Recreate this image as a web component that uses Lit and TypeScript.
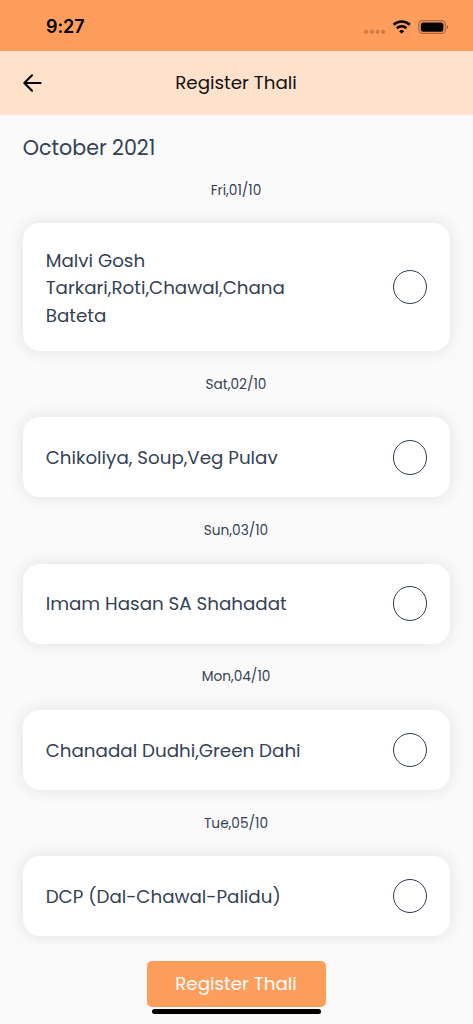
import { LitElement, html, css, svg } from "lit";
import { customElement, property, state } from "lit/decorators.js";

interface Thali {
  date: string;
  menu: string;
}

const THALIS: Thali[] = [
  { date: "Fri,01/10", menu: "Malvi Gosh Tarkari,Roti,Chawal,Chana Bateta" },
  { date: "Sat,02/10", menu: "Chikoliya, Soup,Veg Pulav" },
  { date: "Sun,03/10", menu: "Imam Hasan SA Shahadat" },
  { date: "Mon,04/10", menu: "Chanadal Dudhi,Green Dahi" },
  { date: "Tue,05/10", menu: "DCP (Dal-Chawal-Palidu)" },
];

@customElement("status-bar")
class StatusBar extends LitElement {
  static styles = css`
    :host {
      display: flex;
      align-items: center;
      justify-content: space-between;
      flex: none;
      height: 50.5px;
      box-sizing: border-box;
      padding: 2.5px 24px 0 46px;
      background: #ff9d5c;
      color: #000;
    }
    .time {
      font: 600 18px/24px Inter, sans-serif;
      letter-spacing: -0.1px;
      padding-top: 1px;
    }
    .icons {
      display: block;
    }
  `;
  render() {
    return html`
      <span class="time">9:27</span>
      <svg class="icons" width="86" height="20" viewBox="363 16 86 20">
        <g fill="#c97c49">
          ${[366.2, 371.9, 377.5, 383.2].map((x) => svg`<circle cx=${x} cy="30.8" r="2.1" />`)}
        </g>
        <g fill="none" stroke="#000" stroke-width="2.6">
          <path d="M393.6 23.7a11.7 11.7 0 0 1 16.2 0" />
          <path d="M396.9 27.2a7 7 0 0 1 9.6 0" />
        </g>
        <path d="M401.7 32.8l-2.5-2.6a3.7 3.7 0 0 1 5 0z" />
        <rect x="418.8" y="19.6" width="26.6" height="12.8" rx="4" fill="none" stroke="#a8683e" stroke-width="1.2" />
        <rect x="420.8" y="21.4" width="22.6" height="9.3" rx="2.2" />
        <path d="M446.8 24v4.2c1.7-.8 1.7-3.4 0-4.2z" fill="#8a5533" />
      </svg>
    `;
  }
}

@customElement("thali-card")
class ThaliCard extends LitElement {
  @property() menu = "";
  @state() private chosen = false;

  static styles = css`
    :host {
      display: flex;
      align-items: center;
      justify-content: space-between;
      box-sizing: border-box;
      padding: 22.85px;
      border-radius: 17px;
      background: #fff;
      box-shadow: 0 0 17px rgba(0, 0, 0, 0.1);
    }
    .menu {
      max-width: 262px;
      margin: 0.6px 0 -0.6px;
      font-size: 18.3px;
      line-height: 27.43px;
    }
    .radio {
      flex: none;
      width: 34.3px;
      height: 34.3px;
      box-sizing: border-box;
      padding: 4px;
      border: 1.15px solid #2e3a52;
      border-radius: 50%;
      background: none;
      background-clip: content-box;
    }
    .radio[aria-checked="true"] {
      background-color: #ff9d5c;
    }
  `;
  render() {
    return html`
      <span class="menu">${this.menu}</span>
      <button
        class="radio"
        role="checkbox"
        aria-label=${this.menu}
        aria-checked=${this.chosen ? "true" : "false"}
        @click=${() => (this.chosen = !this.chosen)}
      ></button>
    `;
  }
}

@customElement("app-root")
class AppRoot extends LitElement {
  static styles = css`
    :host {
      display: flex;
      flex-direction: column;
      height: 1024px;
      overflow: hidden;
      background: #fafafa;
      color: #334155;
      font-family: Poppins, Inter, sans-serif;
      font-weight: 400;
    }
    .bar {
      display: grid;
      grid-template-columns: 42px 1fr 43px;
      align-items: center;
      flex: none;
      height: 64px;
      box-sizing: border-box;
      background: #ffe1cc;
      color: #111;
    }
    .back {
      justify-self: end;
      display: block;
    }
    .title {
      text-align: center;
      font-size: 18.3px;
      line-height: 28px;
      padding-top: 1.5px;
    }
    .list {
      flex: none;
      height: 829px;
      box-sizing: border-box;
      overflow: hidden;
      padding: 16.3px 22.85px 0;
    }
    .month {
      font-size: 20.6px;
      line-height: 34px;
    }
    .date {
      text-align: center;
      font-size: 13.7px;
      line-height: 20px;
      padding: 23.9px 1px 22.3px 0;
    }
    .date.first {
      padding-top: 16.1px;
    }
    .footer {
      display: flex;
      flex-direction: column;
      align-items: center;
      padding-top: 17.5px;
      gap: 2px;
    }
    .submit {
      width: 179px;
      height: 45.7px;
      border: 0;
      padding: 0 1px 0 0;
      border-radius: 5px;
      background: #ff9d5c;
      color: #fff;
      font: inherit;
      font-size: 18.3px;
    }
    .home {
      width: 169px;
      height: 5.8px;
      border-radius: 3px;
      background: #000;
    }
  `;
  render() {
    return html`
      <status-bar></status-bar>
      <header class="bar">
        <svg class="back" width="20" height="20" viewBox="0 0 20 20" fill="none" stroke="#000" stroke-width="2.1" stroke-linecap="round" stroke-linejoin="round">
          <path d="M18.6 10H2.6M10 2.3L2.3 10L10 17.7" />
        </svg>
        <span class="title">Register Thali</span>
      </header>
      <main class="list">
        <div class="month">October 2021</div>
        ${THALIS.map(
          (t, i) => html`
            <div class="date ${i === 0 ? "first" : ""}">${t.date}</div>
            <thali-card .menu=${t.menu}></thali-card>
          `
        )}
      </main>
      <footer class="footer">
        <button class="submit">Register Thali</button>
        <div class="home"></div>
      </footer>
    `;
  }
}
